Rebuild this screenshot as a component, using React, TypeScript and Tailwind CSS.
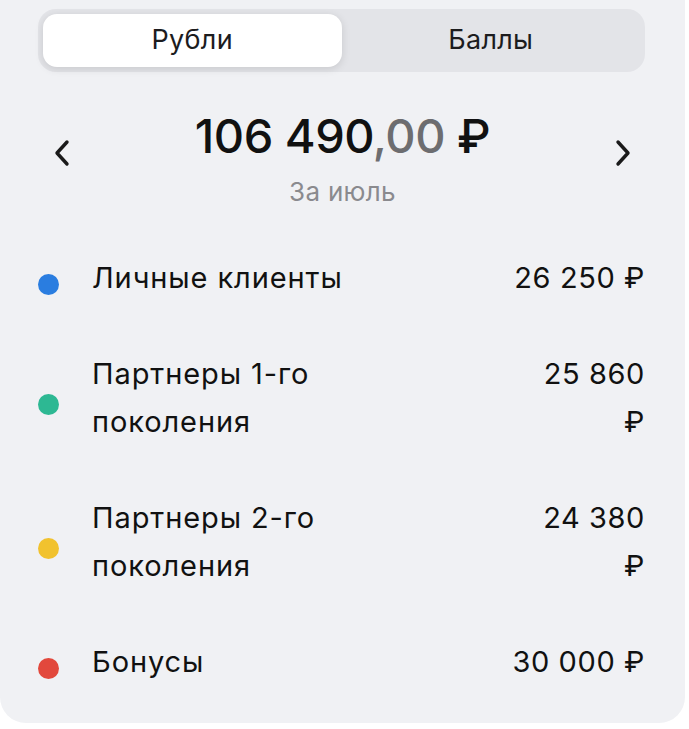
import { useState } from "react";

interface IIncomeRow {
  dot: string;
  label: string[];
  amount: string[];
}

const rows: IIncomeRow[] = [
  { dot: "bg-[#2a7de0]", label: ["Личные клиенты"], amount: ["26 250 ₽"] },
  { dot: "bg-[#2db893]", label: ["Партнеры 1-го", "поколения"], amount: ["25 860", "₽"] },
  { dot: "bg-[#f1c22e]", label: ["Партнеры 2-го", "поколения"], amount: ["24 380", "₽"] },
  { dot: "bg-[#e2483c]", label: ["Бонусы"], amount: ["30 000 ₽"] },
];

const Chevron = ({ dir }: { dir: "left" | "right" }) => (
  <svg width="18" height="28" viewBox="0 0 18 28" fill="none">
    <path
      d={dir === "left" ? "M14 3 L4 14 L14 25" : "M4 3 L14 14 L4 25"}
      stroke="#1a1a1a"
      strokeWidth="3.4"
      strokeLinecap="round"
      strokeLinejoin="round"
    />
  </svg>
);

const App = () => {
  /* Hooks */
  const [tab, setTab] = useState<"rub" | "points">("rub");

  return (
    <div
      className="w-[689px] h-[729px] bg-white overflow-hidden"
      style={{ fontFamily: "Inter, 'Noto Sans', sans-serif" }}
    >
      <div className="w-[685px] bg-[#f0f1f4] rounded-b-[26px] pt-[9px] pb-[37px]">
        {/* Tabs */}
        <div className="ml-[38px] mr-[40px] h-[63px] rounded-[18px] bg-[#e3e4e8] p-[5px] flex">
          <button
            onClick={() => setTab("rub")}
            className={`flex-1 rounded-[14px] text-[27px] tracking-[0.3px] text-[#1c1c1e] ${
              tab === "rub" ? "bg-white shadow-[0_2px_8px_rgba(0,0,0,0.12)]" : ""
            }`}
          >
            Рубли
          </button>
          <button
            onClick={() => setTab("points")}
            className={`flex-1 rounded-[14px] text-[27px] tracking-[0.3px] text-[#1c1c1e] ${
              tab === "points" ? "bg-white shadow-[0_2px_8px_rgba(0,0,0,0.12)]" : ""
            }`}
          >
            Баллы
          </button>
        </div>

        {/* Total */}
        <div className="flex items-center justify-between pl-[53px] pr-[53px] mt-[36px]">
          <button className="mb-[10px]">
            <Chevron dir="left" />
          </button>
          <div className="flex flex-col items-center">
            <div className="text-[47px] leading-[56px] font-medium tracking-[-0.5px] text-[#111]">
              106 490<span className="text-[#6d6d70]">,00</span> ₽
            </div>
            <div className="text-[26px] leading-[30px] tracking-[0.3px] text-[#8a8a8e] mt-[13px]">
              За июль
            </div>
          </div>
          <button className="mb-[10px]">
            <Chevron dir="right" />
          </button>
        </div>

        {/* Rows */}
        <div className="flex flex-col gap-[48px] mt-[47px] pl-[38px] pr-[40px]">
          {rows.map((row) => (
            <div key={row.label.join(" ")} className="flex items-center">
              <span className={`w-[21px] h-[21px] rounded-full flex-none mt-[12px] ${row.dot}`} />
              <div className="flex-grow ml-[33px] text-[29px] tracking-[0.9px] leading-[48px] text-[#111]">
                {row.label.map((line) => (
                  <div key={line}>{line}</div>
                ))}
              </div>
              <div className="text-right text-[29px] tracking-[0.6px] leading-[48px] text-[#111]">
                {row.amount.map((line) => (
                  <div key={line}>{line}</div>
                ))}
              </div>
            </div>
          ))}
        </div>
      </div>
    </div>
  );
};

export default App;
